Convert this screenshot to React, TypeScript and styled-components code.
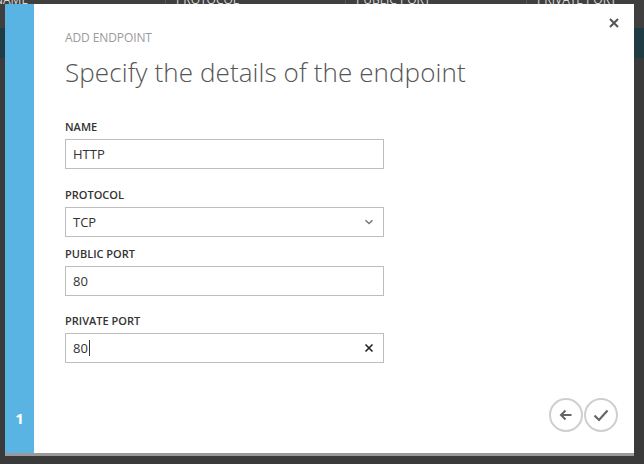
import React from "react";
import styled, { createGlobalStyle } from "styled-components";

const Global = createGlobalStyle`
  html, body { margin: 0; padding: 0; }
  body {
    width: 644px; height: 464px; overflow: hidden;
    background: #3a3a3a;
    font-family: "Open Sans", "Noto Sans", sans-serif;
  }
`;

const Page = styled.div`
  position: relative;
  width: 644px;
  height: 464px;
  background: #3a3a3a;
  overflow: hidden;
`;

const BgHeader = styled.div`
  display: grid;
  grid-template-columns: 165px 180px 181px 1fr;
  height: 34px;
  background: #3f3f3f;
  color: #d8d8d8;
  font-size: 12px;
  line-height: 12px;
  margin-top: -6px;
  & > span {
    padding-left: 10px;
    border-left: 1px solid #555;
    white-space: nowrap;
    overflow: hidden;
  }
  & > span:first-child { padding-left: 0; margin-left: -6px; border-left: none; }
`;

const BgRow = styled.div`
  height: 30px;
  background: #1f3b43;
`;

const Dialog = styled.div`
  position: absolute;
  top: 4px;
  left: 5px;
  width: 629px;
  height: 449px;
  background: #fff;
  display: flex;
  box-shadow: 0 3px 0 #9a9a9a;
`;

const Sidebar = styled.div`
  width: 29px;
  background: #59b4e3;
  display: flex;
  flex-direction: column;
  justify-content: flex-end;
  align-items: center;
  padding-bottom: 25px;
  box-sizing: border-box;
  color: #fff;
  font-weight: 700;
  font-size: 15px;
`;

const Content = styled.div`
  position: relative;
  flex: 1;
  padding: 26px 0 0 31px;
  display: flex;
  flex-direction: column;
`;

const Close = styled.div`
  position: absolute;
  top: 12px;
  right: 13px;
  width: 14px;
  height: 14px;
  display: flex;
  align-items: center;
  justify-content: center;
`;

const Eyebrow = styled.div`
  font-size: 12px;
  color: #9a9a9a;
  line-height: 16px;
  letter-spacing: -0.1px;
`;

const Heading = styled.h1`
  margin: 9px 0 0 0;
  font-size: 26px;
  font-weight: 300;
  color: #555;
  line-height: 34px;
  letter-spacing: 0.1px;
`;

const Field = styled.div<{ $top: number }>`
  margin-top: ${(p) => p.$top}px;
  display: flex;
  flex-direction: column;
`;

const Label = styled.div`
  font-size: 11px;
  font-weight: 600;
  color: #333;
  line-height: 14px;
  margin-bottom: 5px;
`;

const Box = styled.div`
  width: 319px;
  height: 30px;
  box-sizing: border-box;
  border: 1px solid #bdbdbd;
  display: flex;
  align-items: center;
  padding: 0 9px 0 7px;
  font-size: 13px;
  color: #333;
`;

const Value = styled.span`
  flex: 1;
  display: flex;
  align-items: center;
`;

const Caret = styled.span`
  display: inline-block;
  width: 1px;
  height: 16px;
  background: #333;
  margin-left: 1px;
`;

const Footer = styled.div`
  margin-top: auto;
  display: flex;
  justify-content: flex-end;
  gap: 1px;
  padding: 0 16px 21px 0;
`;

const Circle = styled.div`
  width: 34px;
  height: 34px;
  box-sizing: border-box;
  border: 2px solid #cfcfcf;
  border-radius: 50%;
  display: flex;
  align-items: center;
  justify-content: center;
`;

export default function App() {
  return (
    <>
      <Global />
      <Page>
        <BgHeader>
          <span>NAME</span>
          <span>PROTOCOL</span>
          <span>PUBLIC PORT</span>
          <span>PRIVATE PORT</span>
        </BgHeader>
        <BgRow />
        <Dialog>
          <Sidebar>1</Sidebar>
          <Content>
            <Close>
              <svg width="10" height="10" viewBox="0 0 10 10">
                <path d="M1 1L9 9M9 1L1 9" stroke="#555" strokeWidth="2" />
              </svg>
            </Close>
            <Eyebrow>ADD ENDPOINT</Eyebrow>
            <Heading>Specify the details of the endpoint</Heading>
            <Field $top={31}>
              <Label>NAME</Label>
              <Box><Value>HTTP</Value></Box>
            </Field>
            <Field $top={19}>
              <Label>PROTOCOL</Label>
              <Box>
                <Value>TCP</Value>
                <svg width="10" height="6" viewBox="0 0 10 6">
                  <path d="M1.5 1.2L5 4.5L8.5 1.2" stroke="#777" strokeWidth="1.5" fill="none" />
                </svg>
              </Box>
            </Field>
            <Field $top={10}>
              <Label>PUBLIC PORT</Label>
              <Box><Value>80</Value></Box>
            </Field>
            <Field $top={18}>
              <Label>PRIVATE PORT</Label>
              <Box>
                <Value>80<Caret /></Value>
                <svg width="10" height="10" viewBox="0 0 10 10">
                  <path d="M1.5 1.5L8.5 8.5M8.5 1.5L1.5 8.5" stroke="#222" strokeWidth="1.6" />
                </svg>
              </Box>
            </Field>
            <Footer>
              <Circle>
                <svg width="14" height="12" viewBox="0 0 14 12">
                  <path d="M12.5 6H2M6.5 1.5L2 6L6.5 10.5" stroke="#666" strokeWidth="2" fill="none" />
                </svg>
              </Circle>
              <Circle>
                <svg width="16" height="13" viewBox="0 0 16 13">
                  <path d="M1.5 6.5L6 11L14.5 1.5" stroke="#666" strokeWidth="2.2" fill="none" />
                </svg>
              </Circle>
            </Footer>
          </Content>
        </Dialog>
      </Page>
    </>
  );
}
